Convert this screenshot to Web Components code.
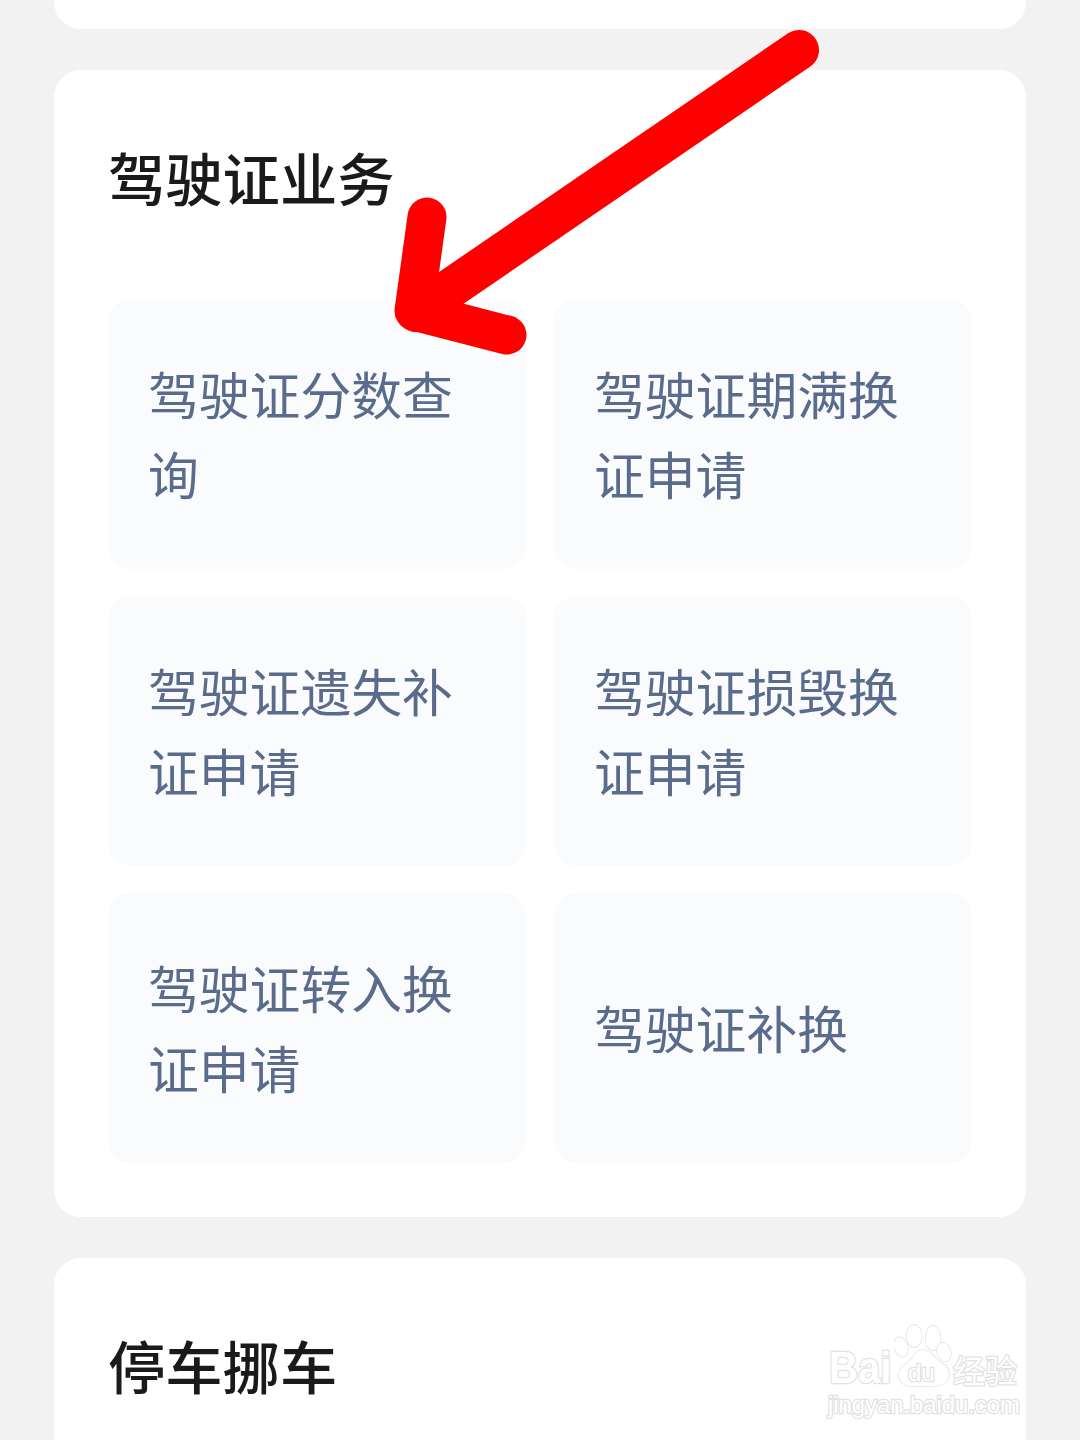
<!DOCTYPE html>
<html lang="zh">
<head>
<meta charset="utf-8">
<style>
    html, body { margin: 0; padding: 0; }
    html { overflow: hidden; }
    body {
        width: 1080px;
        height: 1440px;
        overflow: hidden;
        position: relative;
        background: #f2f2f2;
        font-family: "Noto Sans CJK SC", "Noto Sans", sans-serif;
    }
    .stack {
        display: flex;
        flex-direction: column;
        gap: 41px;
        padding: 0 54px;
        height: 1440px;
        overflow: hidden;
    }
</style>
</head>
<body>
<div class="stack">
    <service-card stub></service-card>
    <service-card heading="驾驶证业务">
        <service-tile>驾驶证分数查询</service-tile>
        <service-tile>驾驶证期满换证申请</service-tile>
        <service-tile>驾驶证遗失补证申请</service-tile>
        <service-tile>驾驶证损毁换证申请</service-tile>
        <service-tile>驾驶证转入换证申请</service-tile>
        <service-tile>驾驶证补换</service-tile>
    </service-card>
    <service-card heading="停车挪车"></service-card>
</div>
<red-arrow></red-arrow>
<baidu-mark></baidu-mark>

<script>
class ServiceCard extends HTMLElement {
    constructor() {
        super();
        this.attachShadow({ mode: 'open' });
    }

    connectedCallback() {
        const stub = this.hasAttribute('stub');
        this.shadowRoot.innerHTML = `
            <style>
                :host {
                    display: block;
                    flex: none;
                    background: #fff;
                    border-radius: 27px;
                    box-sizing: border-box;
                }
                :host([stub]) {
                    height: 29px;
                    border-radius: 0 0 27px 27px;
                }
                .body {
                    padding: 70px 54px 54px;
                }
                h2 {
                    margin: 0 0 86px;
                    font-size: 57.3px;
                    line-height: 73px;
                    font-weight: 500;
                    color: #1a1a1a;
                }
                .grid {
                    display: grid;
                    grid-template-columns: 418px 418px;
                    gap: 27px 28px;
                }
            </style>
            ${stub ? '' : `<div class="body">
                <h2>${this.getAttribute('heading')}</h2>
                <div class="grid"><slot></slot></div>
            </div>`}
        `;
    }
}
customElements.define('service-card', ServiceCard);

class ServiceTile extends HTMLElement {
    constructor() {
        super();
        this.attachShadow({ mode: 'open' });
        this.shadowRoot.innerHTML = `
            <style>
                :host {
                    display: flex;
                    align-items: center;
                    height: 270px;
                    box-sizing: border-box;
                    padding: 0 40px 3px;
                    background: #f9fbfd;
                    border-radius: 22px;
                    font-size: 50.8px;
                    line-height: 80px;
                    color: #5a6b8c;
                }
            </style>
            <slot></slot>
        `;
    }
}
customElements.define('service-tile', ServiceTile);

class RedArrow extends HTMLElement {
    constructor() {
        super();
        this.attachShadow({ mode: 'open' });
        this.shadowRoot.innerHTML = `
            <style>
                :host { position: absolute; left: 0; top: 0; display: block; }
                svg { display: block; }
            </style>
            <svg width="1080" height="1440" viewBox="0 0 1080 1440" fill="none">
                <path d="M799 50 L416 312" stroke="#fe0000" stroke-width="40" stroke-linecap="round"/>
                <path d="M427 217 L414 311 L507 335" stroke="#fe0000" stroke-width="39" stroke-linecap="round" stroke-linejoin="round"/>
            </svg>
        `;
    }
}
customElements.define('red-arrow', RedArrow);

class BaiduMark extends HTMLElement {
    constructor() {
        super();
        this.attachShadow({ mode: 'open' });
        this.shadowRoot.innerHTML = `
            <style>
                :host {
                    position: absolute;
                    left: 826px;
                    top: 1322px;
                    width: 200px;
                    height: 96px;
                    display: block;
                    font-family: "Liberation Sans", sans-serif;
                    color: #fff;
                    -webkit-text-stroke: 2.5px #e2e2e2;
                    paint-order: stroke fill;
                }
                span { position: absolute; white-space: nowrap; }
                .bai { left: 3px; top: 23px; font-size: 45px; line-height: 46px; font-weight: 700; transform: scaleX(.89); transform-origin: left center; }
                .du { left: 82px; top: 39px; font-size: 24px; line-height: 24px; }
                .cn { left: 127px; top: 27px; font-size: 32px; line-height: 40px; font-family: "Noto Sans CJK SC", sans-serif; }
                .url { left: 2px; top: 69px; font-size: 23.8px; line-height: 28px; }
                svg { position: absolute; left: 68px; top: 0; }
            </style>
            <svg width="64" height="68" viewBox="0 0 64 68" fill="#fff" stroke="#e2e2e2" stroke-width="1.5">
                <ellipse cx="20" cy="14" rx="7.5" ry="11"/>
                <ellipse cx="39" cy="16" rx="7.5" ry="12"/>
                <ellipse cx="7" cy="25" rx="6.5" ry="10" transform="rotate(-15 7 25)"/>
                <ellipse cx="50" cy="30" rx="6.5" ry="9.5" transform="rotate(-20 50 30)"/>
                <path d="M29 28 C37 28 40 36 46 40 C55 45 57 51 54 57 C51 63 46 64 40 64 L18 64 C10 64 5 60 5 53 C5 46 10 44 15 39 C20 34 22 28 29 28 Z"/>
            </svg>
            <span class="bai">Bai</span>
            <span class="du">du</span>
            <span class="cn">经验</span>
            <span class="url">jingyan.baidu.com</span>
        `;
    }
}
customElements.define('baidu-mark', BaiduMark);
</script>
</body>
</html>
